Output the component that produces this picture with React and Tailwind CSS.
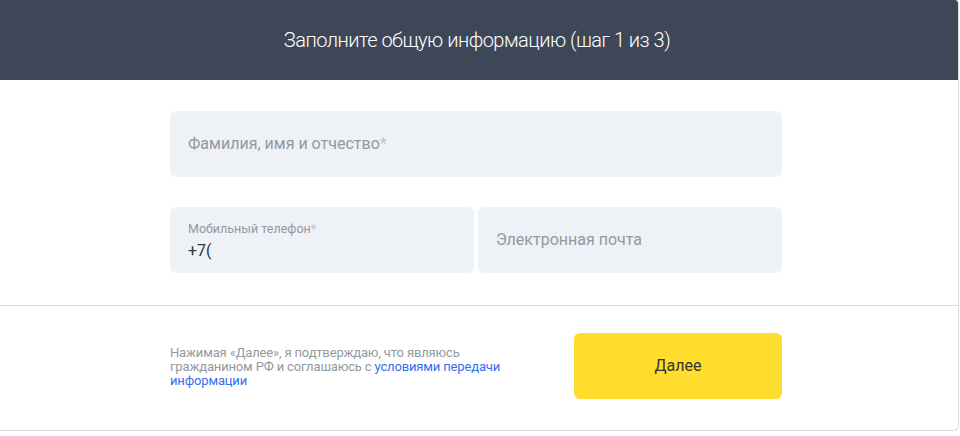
export default function App() {
  const font = { fontFamily: 'Roboto, "Noto Sans", Arial, sans-serif' };
  return (
    <div className="w-[960px] h-[436px] bg-white" style={font}>
      <div className="w-[959px] h-[431px] border-r border-b border-[#dcdcdc] rounded-tr-[4px] rounded-br-[6px] overflow-hidden bg-white">
        <div className="h-[80px] bg-[#3e4757] flex items-center justify-center">
          <div className="text-white text-[20px] font-light tracking-[-0.5px] pr-[4px]">Заполните общую информацию (шаг 1 из 3)</div>
        </div>
        <div className="pl-[170px] pt-[31px] pb-[32px] border-b border-[#dcdcdc]">
          <div className="w-[612px] flex flex-col gap-[30px]">
            <div className="h-[66px] rounded-[6px] bg-[#eef1f6] flex items-center px-[18px]">
              <span className="text-[16px] text-[#9299a2]">Фамилия, имя и отчество<span className="text-[#c0c4ca]">*</span></span>
            </div>
            <div className="flex gap-[4px]">
              <div className="w-[304px] h-[66px] rounded-[6px] bg-[#eef1f6] flex flex-col justify-center px-[18px] pt-[3px]">
                <span className="text-[12.5px] leading-[16px] text-[#9299a2]">Мобильный телефон<span className="text-[#c0c4ca]">*</span></span>
                <span className="text-[16px] leading-[22px] mt-[3px] text-[#333333]">+7(</span>
              </div>
              <div className="w-[304px] h-[66px] rounded-[6px] bg-[#eef1f6] flex items-center px-[18px]">
                <span className="text-[16px] text-[#9299a2]">Электронная почта</span>
              </div>
            </div>
          </div>
        </div>
        <div className="pl-[170px] pt-[27px] flex items-center">
          <div className="w-[612px] flex items-center justify-between">
            <p className="w-[360px] text-[13px] tracking-[-0.15px] leading-[14px] text-[#9299a2] pt-[1px]">
              Нажимая «Далее», я подтверждаю, что являюсь<br />
              гражданином РФ и соглашаюсь с <span className="text-[#336fee]">условиями передачи</span><br />
              <span className="text-[#336fee]">информации</span>
            </p>
            <div className="w-[208px] h-[66px] rounded-[6px] bg-[#ffdd2d] flex items-center justify-center">
              <span className="text-[16px] text-[#333333]">Далее</span>
            </div>
          </div>
        </div>
      </div>
    </div>
  );
}
